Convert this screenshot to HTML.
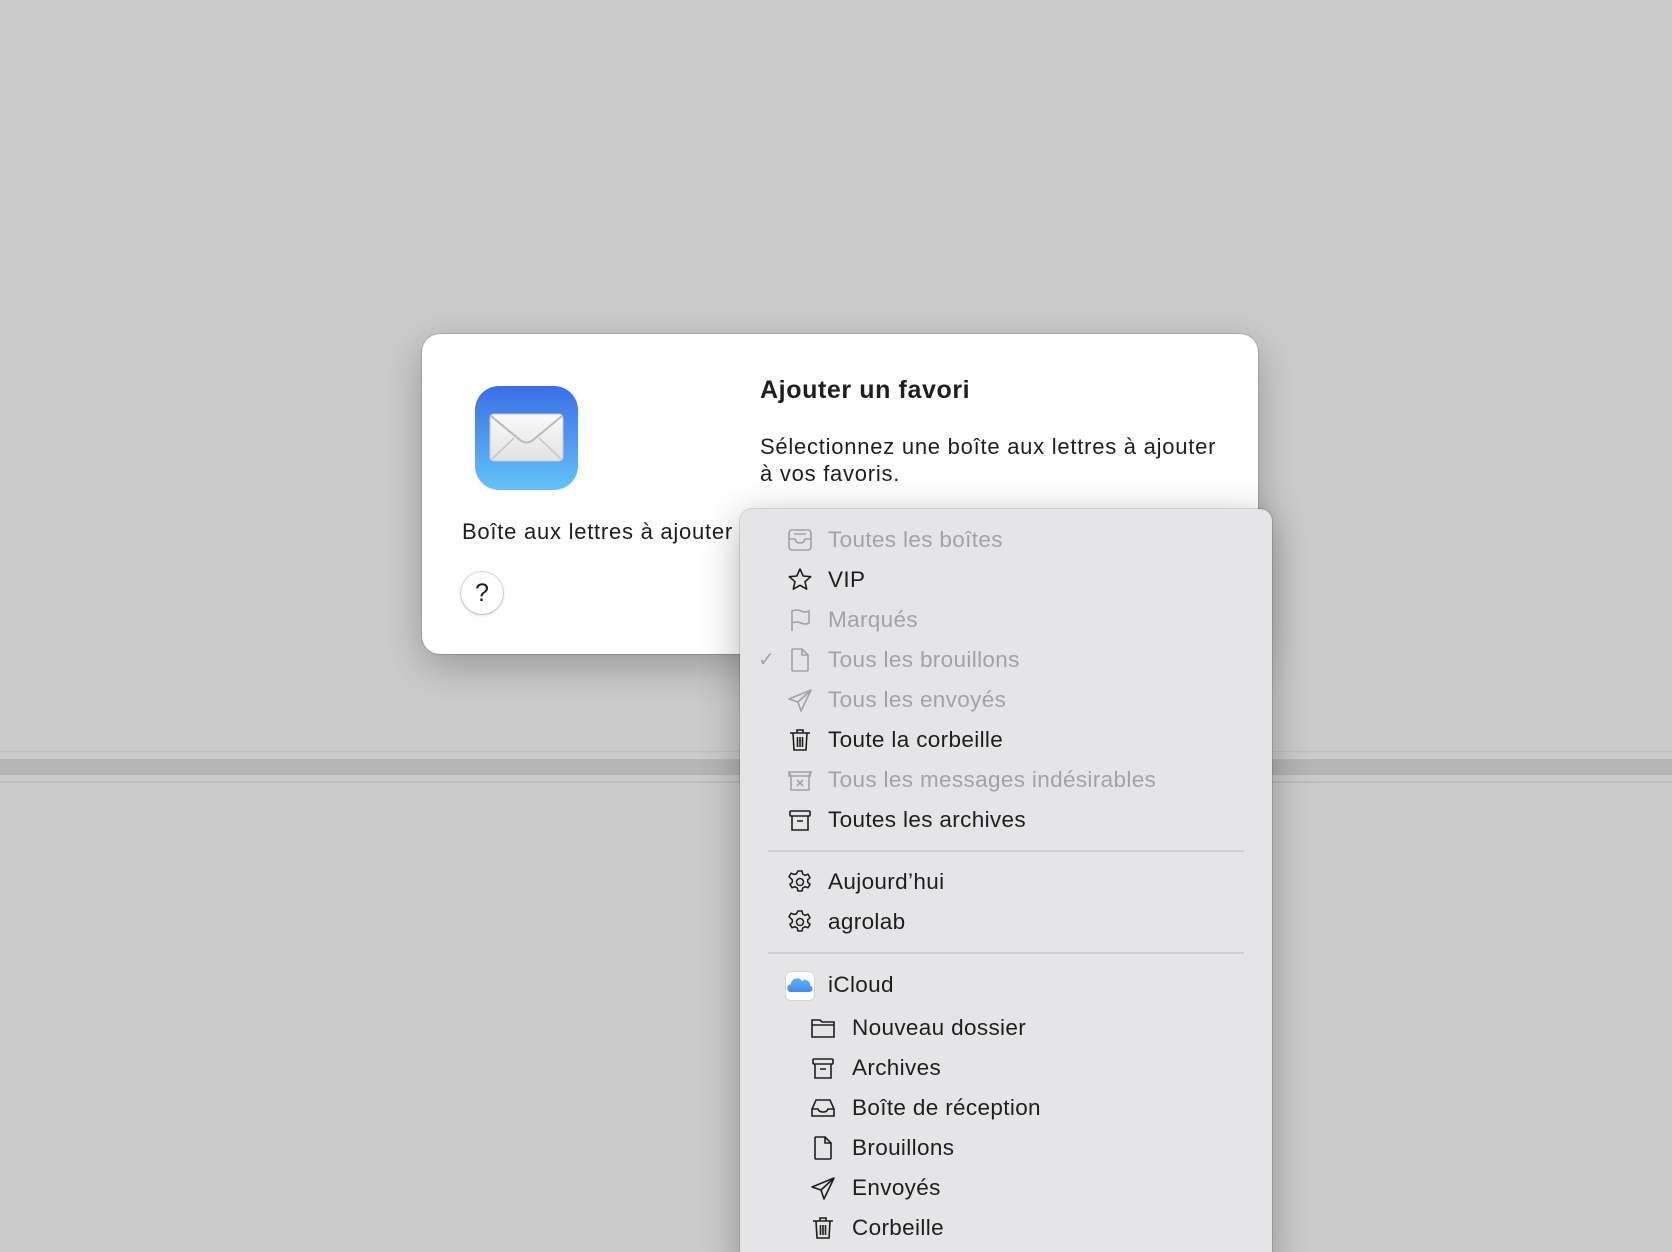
<!DOCTYPE html>
<html style="width:1672px;height:1252px;overflow:hidden"><head><meta charset="utf-8"><style>
*{margin:0;padding:0;box-sizing:border-box}
body{width:1672px;height:1252px;background:#cbcbcb;position:relative;overflow:hidden;font-family:"Liberation Sans",sans-serif;color:#1e1e1e}
.l1{position:absolute;left:0;right:0;top:751px;height:1px;background:#c0c0c0}
.band{position:absolute;left:0;right:0;top:759px;height:16px;background:#b5b5b5}
.l2{position:absolute;left:0;right:0;top:781px;height:2px;background:#bdbdbd}
.dlg{position:absolute;left:422px;top:334px;width:836px;height:320px;background:#fff;border-radius:18px;box-shadow:0 0 0 1px rgba(0,0,0,.12),0 12px 40px rgba(0,0,0,.25)}
.t{position:absolute;font-size:22px;line-height:28px;letter-spacing:.75px;white-space:nowrap}
.menu{position:absolute;left:740px;top:509px;width:532px;height:760px;background:#e5e5e7;border-radius:12px;box-shadow:0 0 0 1px rgba(0,0,0,.12),0 10px 40px rgba(0,0,0,.3)}
.it{position:absolute;font-size:22.5px;line-height:30px;height:30px;letter-spacing:.35px;white-space:nowrap}
.g{color:#a3a3a5}
.ic{position:absolute;width:28px;height:28px}
.sep{position:absolute;left:768px;width:476px;height:2px;background:#cfcfd1}
</style></head><body>
<div class="l1"></div><div class="band"></div><div class="l2"></div>
<div class="dlg"></div>
<svg style="position:absolute;left:474px;top:385px" width="105" height="106" viewBox="0 0 105 106">
<defs><linearGradient id="bg" x1="0" y1="0" x2="0" y2="1"><stop offset="0" stop-color="#3a6fe6"/><stop offset="1" stop-color="#63c3f8"/></linearGradient>
<linearGradient id="ev" x1="0" y1="0" x2="0" y2="1"><stop offset="0" stop-color="#fafafa"/><stop offset="1" stop-color="#e2e2e4"/></linearGradient></defs>
<rect x="1" y="1" width="103" height="104" rx="24" fill="url(#bg)"/>
<rect x="16" y="29" width="73" height="47" rx="4" fill="url(#ev)" stroke="#c9c9cc"/>
<path d="M17 31 L46 55 Q52.5 60 59 55 L88 31" fill="none" stroke="#b9b9bd" stroke-width="2"/>
<path d="M18 74 L40 53 M87 74 L65 53" stroke="#c4c4c8" stroke-width="1.5"/>
</svg>
<div class="t" style="left:760px;top:376px;font-size:25px;font-weight:bold;letter-spacing:.6px">Ajouter un favori</div>
<div class="t" style="left:760px;top:433px">Sélectionnez une boîte aux lettres à ajouter</div>
<div class="t" style="left:760px;top:460px">à vos favoris.</div>
<div class="t" style="left:462px;top:518px">Boîte aux lettres à ajouter :</div>
<div style="position:absolute;left:461px;top:572px;width:42px;height:42px;border-radius:50%;background:#fff;box-shadow:0 0 0 1px rgba(0,0,0,.12),0 1px 3px rgba(0,0,0,.2);font-size:25px;text-align:center;line-height:42px">?</div>

<div class="menu"></div>
<svg class="ic" style="left:786px;top:526px" viewBox="0 0 28 28" fill="none" stroke="#a3a3a5" stroke-width="1.6"><rect x="3" y="4" width="22" height="20" rx="3"/><path d="M3 13h6q1 4 5 4t5-4h6M8 8h12"/></svg>
<div class="it g" style="left:828px;top:525px">Toutes les boîtes</div>
<svg class="ic" style="left:786px;top:566px" viewBox="0 0 28 28" fill="none" stroke="#1e1e1e" stroke-width="1.6" stroke-linejoin="round"><path d="M14 3l3.2 7 7.5.7-5.7 5 1.7 7.4L14 19.3l-6.7 3.8 1.7-7.4-5.7-5 7.5-.7z"/></svg>
<div class="it" style="left:828px;top:565px">VIP</div>
<svg class="ic" style="left:786px;top:606px" viewBox="0 0 28 28" fill="none" stroke="#a3a3a5" stroke-width="1.6"><path d="M6 25V5q5-2 9 0t8 0v12q-4 2-8 0t-9 0"/></svg>
<div class="it g" style="left:828px;top:605px">Marqués</div>
<div class="it g" style="left:758px;top:645px;font-size:20px">✓</div>
<svg class="ic" style="left:786px;top:646px" viewBox="0 0 28 28" fill="none" stroke="#a3a3a5" stroke-width="1.6"><path d="M7 3h9l6 6v15a1 1 0 0 1-1 1H7a1 1 0 0 1-1-1V4a1 1 0 0 1 1-1zM16 3v6h6"/></svg>
<div class="it g" style="left:828px;top:645px">Tous les brouillons</div>
<svg class="ic" style="left:786px;top:686px" viewBox="0 0 28 28" fill="none" stroke="#a3a3a5" stroke-width="1.6" stroke-linejoin="round"><path d="M25 4L3 13l9 3 3 9zM12 16l13-12"/></svg>
<div class="it g" style="left:828px;top:685px">Tous les envoyés</div>
<svg class="ic" style="left:786px;top:726px" viewBox="0 0 28 28" fill="none" stroke="#1e1e1e" stroke-width="1.6"><path d="M4 7h20M11 7V4h6v3M7 7l1 17h12l1-17M11.5 11v10M14 11v10M16.5 11v10"/></svg>
<div class="it" style="left:828px;top:725px">Toute la corbeille</div>
<svg class="ic" style="left:786px;top:766px" viewBox="0 0 28 28" fill="none" stroke="#a3a3a5" stroke-width="1.6"><path d="M3 6h22l-2 4v14H5V10zM3 6v4h22M11 14l6 6M17 14l-6 6"/></svg>
<div class="it g" style="left:828px;top:765px">Tous les messages indésirables</div>
<svg class="ic" style="left:786px;top:806px" viewBox="0 0 28 28" fill="none" stroke="#1e1e1e" stroke-width="1.6"><rect x="4" y="5" width="20" height="5" rx="1"/><path d="M6 10v14h16V10M11 15h6"/></svg>
<div class="it" style="left:828px;top:805px">Toutes les archives</div>
<div class="sep" style="top:850px"></div>
<svg class="ic" style="left:786px;top:868px" viewBox="0 0 28 28" fill="none" stroke="#1e1e1e" stroke-width="1.5"><path d="M12 3h4l.7 3 2.3 1.3 3-1 2 3.4-2.3 2.1v2.4l2.3 2.1-2 3.4-3-1-2.3 1.3-.7 3h-4l-.7-3-2.3-1.3-3 1-2-3.4 2.3-2.1v-2.4L3 8.7l2-3.4 3 1L10.3 6z"/><circle cx="14" cy="14" r="3.5"/></svg>
<div class="it" style="left:828px;top:867px">Aujourd’hui</div>
<svg class="ic" style="left:786px;top:908px" viewBox="0 0 28 28" fill="none" stroke="#1e1e1e" stroke-width="1.5"><path d="M12 3h4l.7 3 2.3 1.3 3-1 2 3.4-2.3 2.1v2.4l2.3 2.1-2 3.4-3-1-2.3 1.3-.7 3h-4l-.7-3-2.3-1.3-3 1-2-3.4 2.3-2.1v-2.4L3 8.7l2-3.4 3 1L10.3 6z"/><circle cx="14" cy="14" r="3.5"/></svg>
<div class="it" style="left:828px;top:907px">agrolab</div>
<div class="sep" style="top:952px"></div>
<svg style="position:absolute;left:785px;top:971px" width="30" height="30" viewBox="0 0 30 30"><defs><linearGradient id="cl" x1="0" y1="0" x2="0" y2="1"><stop offset="0" stop-color="#5fb0f5"/><stop offset="1" stop-color="#3d8ef0"/></linearGradient></defs><rect x="0.5" y="0.5" width="29" height="29" rx="6" fill="#fff" stroke="#d5d5d7"/><path d="M5 21a4 4 0 0 1 1-7.8A6 6 0 0 1 17 10a5 5 0 0 1 8 4.5A3.3 3.3 0 0 1 24 21z" fill="url(#cl)"/></svg>
<div class="it" style="left:828px;top:970px">iCloud</div>
<svg class="ic" style="left:809px;top:1014px" viewBox="0 0 28 28" fill="none" stroke="#1e1e1e" stroke-width="1.6"><path d="M3 6h8l2 2h12v15H3zM3 11h22"/></svg>
<div class="it" style="left:852px;top:1013px">Nouveau dossier</div>
<svg class="ic" style="left:809px;top:1054px" viewBox="0 0 28 28" fill="none" stroke="#1e1e1e" stroke-width="1.6"><rect x="4" y="5" width="20" height="5" rx="1"/><path d="M6 10v14h16V10M11 15h6"/></svg>
<div class="it" style="left:852px;top:1053px">Archives</div>
<svg class="ic" style="left:809px;top:1094px" viewBox="0 0 28 28" fill="none" stroke="#1e1e1e" stroke-width="1.6"><path d="M7 6h14l4 9v7H3v-7zM3 15h6q1 3 5 3t5-3h6"/></svg>
<div class="it" style="left:852px;top:1093px">Boîte de réception</div>
<svg class="ic" style="left:809px;top:1134px" viewBox="0 0 28 28" fill="none" stroke="#1e1e1e" stroke-width="1.6"><path d="M7 3h9l6 6v15a1 1 0 0 1-1 1H7a1 1 0 0 1-1-1V4a1 1 0 0 1 1-1zM16 3v6h6"/></svg>
<div class="it" style="left:852px;top:1133px">Brouillons</div>
<svg class="ic" style="left:809px;top:1174px" viewBox="0 0 28 28" fill="none" stroke="#1e1e1e" stroke-width="1.6" stroke-linejoin="round"><path d="M25 4L3 13l9 3 3 9zM12 16l13-12"/></svg>
<div class="it" style="left:852px;top:1173px">Envoyés</div>
<svg class="ic" style="left:809px;top:1214px" viewBox="0 0 28 28" fill="none" stroke="#1e1e1e" stroke-width="1.6"><path d="M4 7h20M11 7V4h6v3M7 7l1 17h12l1-17M11.5 11v10M14 11v10M16.5 11v10"/></svg>
<div class="it" style="left:852px;top:1213px">Corbeille</div>
</body></html>
